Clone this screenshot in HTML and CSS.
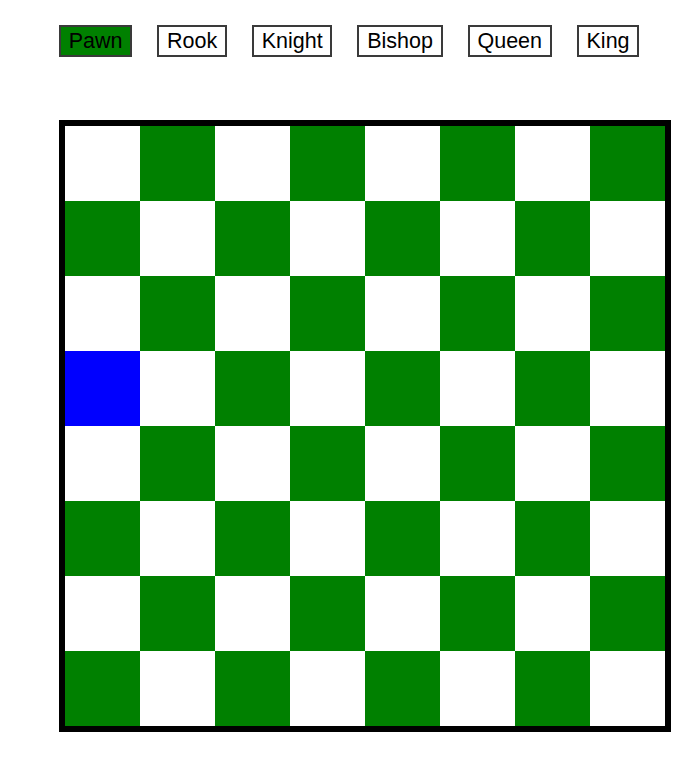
FILE: index.html
```html
<!DOCTYPE html>
<html lang="en">

<head>
  <meta charset="UTF-8">
  <meta name="viewport" content="width=device-width, initial-scale=1.0">
  <title>Chess moves</title>
  <link rel="stylesheet" href="styles.css">
</head>

<body>
  <section id="piece-picker">
    <button class="piece-btn active">Pawn</button>
    <button class="piece-btn">Rook</button>
    <button class="piece-btn">Knight</button>
    <button class="piece-btn">Bishop</button>
    <button class="piece-btn">Queen</button>
    <button class="piece-btn">King</button>
  </section>
  <section id="board"></section>

  <script>
    var board = document.getElementById('board');
    var selected = { row: 3, col: 0 };
    for (var row = 0; row < 8; row++) {
      for (var col = 0; col < 8; col++) {
        var cell = document.createElement('div');
        cell.className = 'cell ' + ((row + col) % 2 ? 'dark' : 'light');
        if (row === selected.row && col === selected.col) {
          cell.classList.add('selected');
        }
        board.appendChild(cell);
      }
    }
    var buttons = document.querySelectorAll('.piece-btn');
    buttons.forEach(function (btn) {
      btn.addEventListener('click', function () {
        buttons.forEach(function (b) { b.classList.remove('active'); });
        btn.classList.add('active');
      });
    });
  </script>
</body>

</html>
```

FILE: styles.css
```css
body {
  margin: 0;
  padding: 25px 0 0 59px;
  font-family: "Liberation Sans", Arial, sans-serif;
}

#piece-picker {
  display: flex;
  gap: 25px;
  height: 32px;
}

.piece-btn {
  margin: 0;
  padding: 2px 7.75px;
  border: 2px solid #3a3a3a;
  border-radius: 0;
  background: #fff;
  color: #000;
  font-family: inherit;
  font-size: 21.5px;
  line-height: 24px;
  cursor: pointer;
}
.piece-btn.active {
  background: #008000;
}

#board {
  margin-top: 63px;
  width: 600px;
  height: 600px;
  border: 6px solid #000;
  display: grid;
  grid-template-columns: repeat(8, 75px);
  grid-template-rows: repeat(8, 75px);
}

.cell.light {
  background: #fff;
}
.cell.dark {
  background: #008000;
}
.cell.selected {
  background: #0000ff;
}
```
